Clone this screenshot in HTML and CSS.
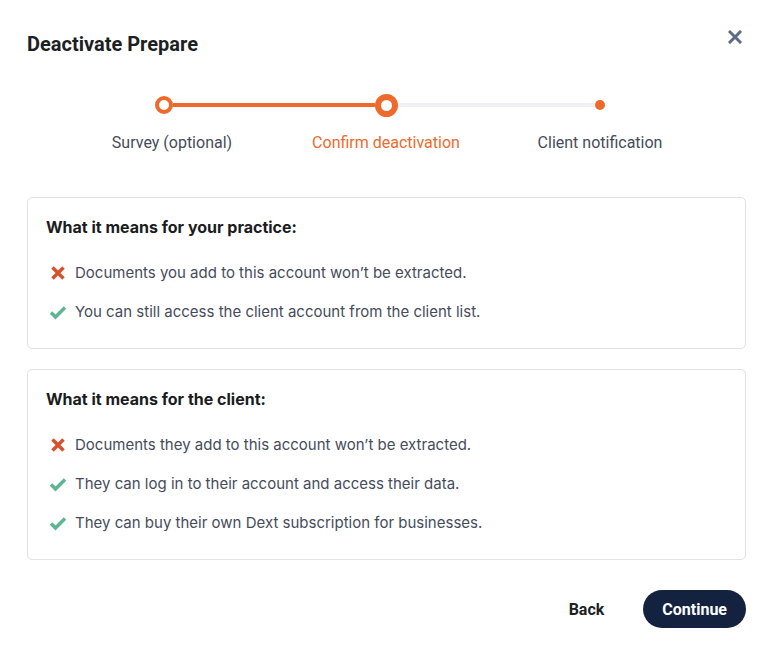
FILE: index.html
```html
<!DOCTYPE html>
<html lang="en">
<head>
  <meta charset="UTF-8" />
  <meta name="viewport" content="width=device-width, initial-scale=1.0"/>
  <title>Deactivate Prepare</title>
  <link rel="stylesheet" href="styles.css">
</head>
<body>

  <div class="modal">
    <div class="modal-header">
      <h1>Deactivate Prepare</h1>
      <button class="close" aria-label="Close">
        <svg width="14" height="14" viewBox="0 0 14 14">
          <path d="M2 2 L12 12 M12 2 L2 12" stroke="#5f6b85" stroke-width="3" stroke-linecap="square" />
        </svg>
      </button>
    </div>

    <div class="stepper">
      <div class="track">
        <span class="dot done"></span>
        <span class="line active"></span>
        <span class="dot current"></span>
        <span class="line"></span>
        <span class="dot next"></span>
      </div>
      <div class="labels">
        <span>Survey (optional)</span>
        <span class="on">Confirm deactivation</span>
        <span>Client notification</span>
      </div>
    </div>

    <div class="card">
      <h2>What it means for your practice:</h2>
      <ul>
        <li><svg class="icon" viewBox="0 0 18 18"><path d="M3.5 3.5 L14.5 14.5 M14.5 3.5 L3.5 14.5" stroke="#d9512c" stroke-width="3.5" /></svg>Documents you add to this account won’t be extracted.</li>
        <li><svg class="icon" viewBox="0 0 18 18"><path d="M2 9.5 L6.5 14 L16 4.5" stroke="#5bb691" stroke-width="3.5" fill="none" /></svg>You can still access the client account from the client list.</li>
      </ul>
    </div>

    <div class="card">
      <h2>What it means for the client:</h2>
      <ul>
        <li><svg class="icon" viewBox="0 0 18 18"><path d="M3.5 3.5 L14.5 14.5 M14.5 3.5 L3.5 14.5" stroke="#d9512c" stroke-width="3.5" /></svg>Documents they add to this account won’t be extracted.</li>
        <li><svg class="icon" viewBox="0 0 18 18"><path d="M2 9.5 L6.5 14 L16 4.5" stroke="#5bb691" stroke-width="3.5" fill="none" /></svg>They can log in to their account and access their data.</li>
        <li><svg class="icon" viewBox="0 0 18 18"><path d="M2 9.5 L6.5 14 L16 4.5" stroke="#5bb691" stroke-width="3.5" fill="none" /></svg>They can buy their own Dext subscription for businesses.</li>
      </ul>
    </div>

    <div class="actions">
      <button class="back">Back</button>
      <button class="continue">Continue</button>
    </div>
  </div>

</body>
</html>
```

FILE: styles.css
```css
body {
  font-family: Inter, "Noto Sans", sans-serif;
  background-color: #ffffff;
  margin: 0;
}

.modal {
  padding: 28px 24px 0 27px;
}

.modal-header {
  display: flex;
  justify-content: space-between;
  align-items: flex-start;
  height: 36px;
}

h1 {
  margin: 4px 0 0;
  font-family: Roboto, sans-serif;
  font-size: 20px;
  font-weight: 700;
  line-height: 24px;
  color: #1d1f24;
}

.close {
  border: none;
  background: none;
  padding: 0;
  margin: 2px 4px 0 0;
  cursor: pointer;
}

.close svg {
  display: block;
}

.stepper {
  margin-top: 30px;
  margin-bottom: 44px;
}

.track {
  display: flex;
  align-items: center;
  margin-left: 128px;
  height: 22px;
}

.dot {
  box-sizing: border-box;
  border-radius: 50%;
  flex: none;
}

.dot.done {
  width: 18px;
  height: 18px;
  border: 4px solid #ee6a2c;
  background: #fff;
}

.dot.current {
  width: 23px;
  height: 23px;
  border: 6px solid #ee6a2c;
  background: #fff;
}

.dot.next {
  width: 10px;
  height: 10px;
  background: #ee6a2c;
}

.line {
  height: 4px;
  background: #eff0f4;
  width: 197px;
}

.line.active {
  background: #ee6a2c;
  width: 202px;
}

.labels {
  display: grid;
  grid-template-columns: repeat(3, 214px);
  margin-left: 38px;
  margin-top: 17px;
  font-family: Roboto, sans-serif;
  font-size: 16px;
  line-height: 20px;
  color: #454b5a;
  text-align: center;
}

.labels .on {
  color: #ee6a2c;
}

.card {
  border: 1px solid #dfe2e7;
  border-radius: 5px;
  padding: 17px 18px 24px;
  margin-bottom: 20px;
}

h2 {
  margin: 0 0 22px;
  font-size: 16px;
  font-weight: 700;
  line-height: 24px;
  color: #1a1c21;
}

ul {
  list-style: none;
  margin: 0;
  padding: 0 0 0 3px;
}

li {
  display: flex;
  align-items: center;
  gap: 8px;
  font-size: 15px;
  line-height: 24px;
  color: #464c5b;
}

li + li {
  margin-top: 15px;
}

.icon {
  width: 18px;
  height: 18px;
  flex: none;
}

.actions {
  display: flex;
  justify-content: flex-end;
  align-items: center;
  gap: 20px;
  margin-top: 30px;
}

.actions button {
  font-family: Roboto, sans-serif;
  font-size: 16px;
  font-weight: 700;
  border: none;
  border-radius: 19px;
  height: 38px;
  padding: 0 19px;
  cursor: pointer;
}

.back {
  background: none;
  color: #1d1f24;
}

.continue {
  background: #13223f;
  color: #ffffff;
}
```
